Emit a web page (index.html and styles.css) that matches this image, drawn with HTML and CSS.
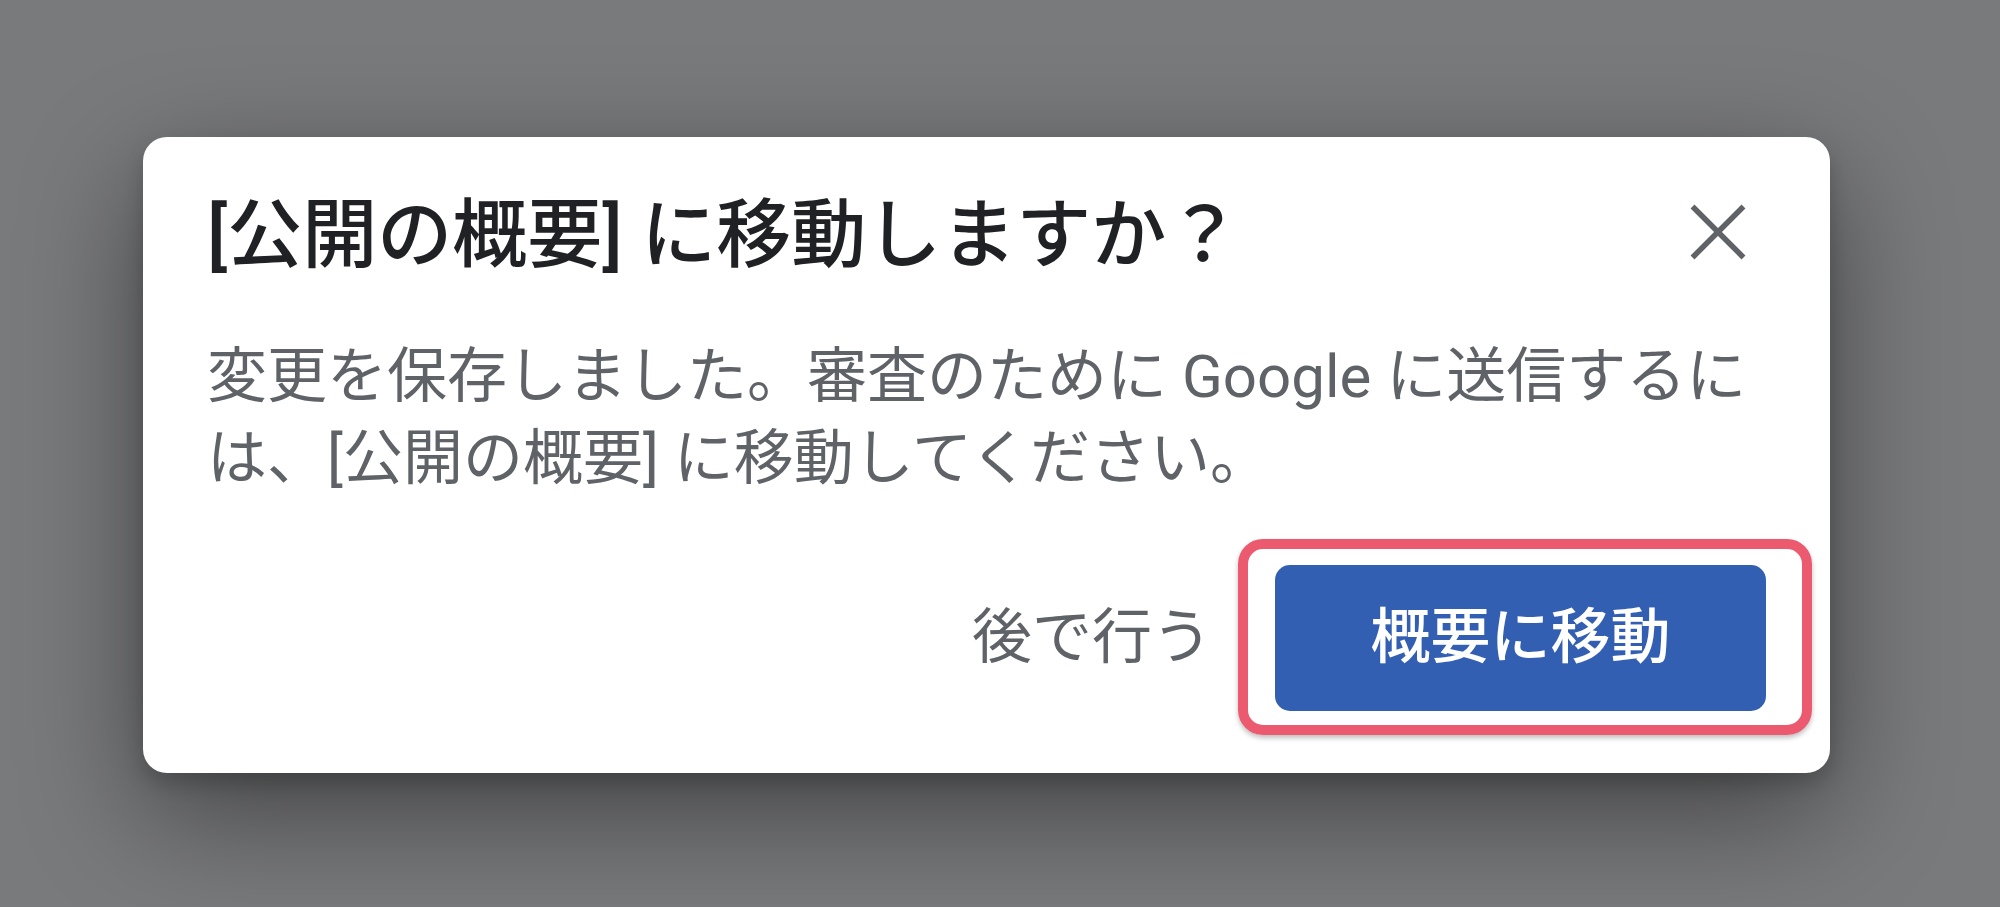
FILE: index.html
```html
<!DOCTYPE html>
<html lang="ja">
<head>
<meta charset="utf-8">
<title>[公開の概要] に移動しますか？</title>
<link rel="stylesheet" href="styles.css">
</head>
<body>
<div class="overlay">
  <div class="dialog" role="dialog" aria-labelledby="dlg-title">
    <div class="dialog-header">
      <h1 class="dialog-title" id="dlg-title">[公開の概要] に移動しますか？</h1>
      <button class="close-btn" aria-label="閉じる">
        <svg class="close-icon" viewBox="0 0 96 96" width="96" height="96" aria-hidden="true">
          <line x1="22.5" y1="19.5" x2="73.5" y2="70.5"/>
          <line x1="73.5" y1="19.5" x2="22.5" y2="70.5"/>
        </svg>
      </button>
    </div>
    <p class="dialog-body">変更を保存しました。審査のために Google に送信するに<br>は、[公開の概要] に移動してください。</p>
    <div class="dialog-actions">
      <button class="text-btn">後で行う</button>
      <div class="highlight-wrap">
        <button class="primary-btn">概要に移動</button>
        <span class="highlight" aria-hidden="true"></span>
      </div>
    </div>
  </div>
</div>
</body>
</html>
```
FILE: styles.css
```css
html, body {
  margin: 0;
  height: 100%;
}

body {
  background: #797a7c;
  font-family: Roboto, "Noto Sans CJK JP", sans-serif;
  overflow: hidden;
}

.overlay {
  height: 907px;
  box-sizing: border-box;
  padding: 137px 0 0 143px;
}

.dialog {
  width: 1687px;
  height: 636px;
  box-sizing: border-box;
  background: #ffffff;
  border-radius: 24px;
  padding: 50px 64px 62px 64px;
  display: flex;
  flex-direction: column;
  box-shadow: 0 40px 120px rgba(0, 0, 0, 0.45), 0 10px 20px rgba(0, 0, 0, 0.18);
}

.dialog-header {
  display: flex;
  align-items: center;
  height: 96px;
}

.dialog-title {
  flex: 1;
  margin: 0;
  font-size: 75px;
  line-height: 96px;
  font-weight: 500;
  color: #202124;
  white-space: nowrap;
}

.close-btn {
  width: 96px;
  height: 96px;
  padding: 0;
  border: 0;
  background: none;
  display: flex;
  align-items: center;
  justify-content: center;
}

.close-icon line {
  stroke: #5f6368;
  stroke-width: 5.5;
}

.dialog-body {
  margin: 53px 0 0;
  font-size: 60px;
  line-height: 82px;
  color: #5f6368;
  white-space: nowrap;
}

.dialog-actions {
  margin-top: auto;
  display: flex;
  justify-content: flex-end;
  align-items: center;
}

.text-btn {
  height: 146px;
  padding: 0 32px;
  margin-right: 31px;
  border: 0;
  background: none;
  font-family: inherit;
  font-size: 60px;
  line-height: 60px;
  color: #5f6368;
}

.highlight-wrap {
  position: relative;
  display: flex;
}

.primary-btn {
  width: 491px;
  height: 146px;
  border: 0;
  border-radius: 15px;
  background: #335fb3;
  color: #ffffff;
  font-family: inherit;
  font-size: 60px;
  line-height: 60px;
  font-weight: 500;
}

.highlight {
  position: absolute;
  top: -26px;
  left: -37px;
  right: -46px;
  bottom: -24px;
  border: 10px solid #eb5a6e;
  border-radius: 25px;
  box-shadow: 0 3px 5px rgba(0, 0, 0, 0.25);
  pointer-events: none;
}
```
